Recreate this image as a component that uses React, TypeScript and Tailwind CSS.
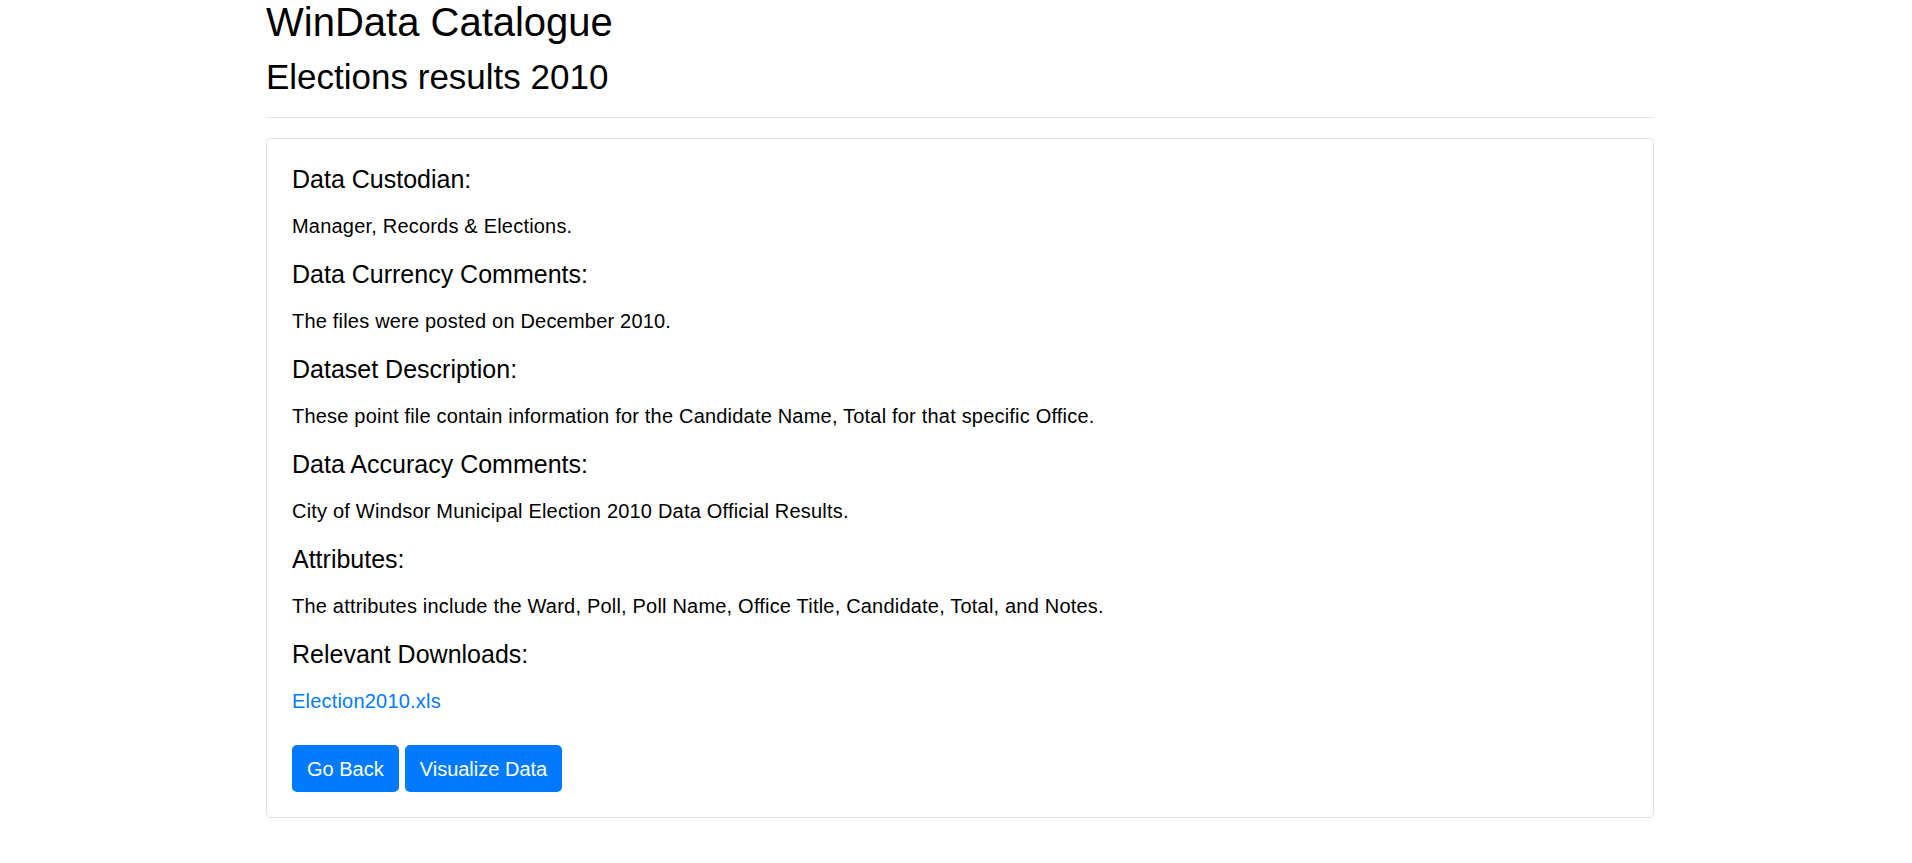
const sections = [
  { title: 'Data Custodian:', text: 'Manager, Records & Elections.' },
  { title: 'Data Currency Comments:', text: 'The files were posted on December 2010.' },
  {
    title: 'Dataset Description:',
    text: 'These point file contain information for the Candidate Name, Total for that specific Office.',
  },
  { title: 'Data Accuracy Comments:', text: 'City of Windsor Municipal Election 2010 Data Official Results.' },
  {
    title: 'Attributes:',
    text: 'The attributes include the Ward, Poll, Poll Name, Office Title, Candidate, Total, and Notes.',
  },
]

export default function App() {
  return (
    <div className="min-h-screen bg-white text-black font-['Trebuchet_MS','Liberation_Sans',sans-serif]">
      <div className="ml-[266px] w-[1388px]">
        <h1 className="text-[40px] leading-[48px] font-normal -mt-[2px]">WinData Catalogue</h1>
        <h2 className="mt-[10px] text-[35px] leading-[42px] font-normal">Elections results 2010</h2>
        <hr className="mt-[19px] border-t border-[#e5e5e5]" />

        <div className="mt-[20px] rounded-[5px] border border-[#dfdfdf] px-[25px] pt-[25px] pb-[25px]">
          {sections.map((s) => (
            <div key={s.title}>
              <h5 className="mb-[17px] text-[25px] leading-[30px] font-normal">{s.title}</h5>
              <p className="mb-[18px] text-[20px] leading-[30px] tracking-[0.2px]">{s.text}</p>
            </div>
          ))}

          <h5 className="mb-[17px] text-[25px] leading-[30px] font-normal">Relevant Downloads:</h5>
          <p className="mb-[29px] text-[20px] leading-[30px] tracking-[0.2px]">
            <a href="#" className="text-[#007bff] hover:underline">
              Election2010.xls
            </a>
          </p>

          <div className="flex gap-[6px]">
            <button className="h-[47px] rounded-[5px] bg-[#007bff] px-[15px] text-[20px] text-white">
              Go Back
            </button>
            <button className="h-[47px] rounded-[5px] bg-[#007bff] px-[15px] text-[20px] text-white">
              Visualize Data
            </button>
          </div>
        </div>
      </div>
    </div>
  )
}
